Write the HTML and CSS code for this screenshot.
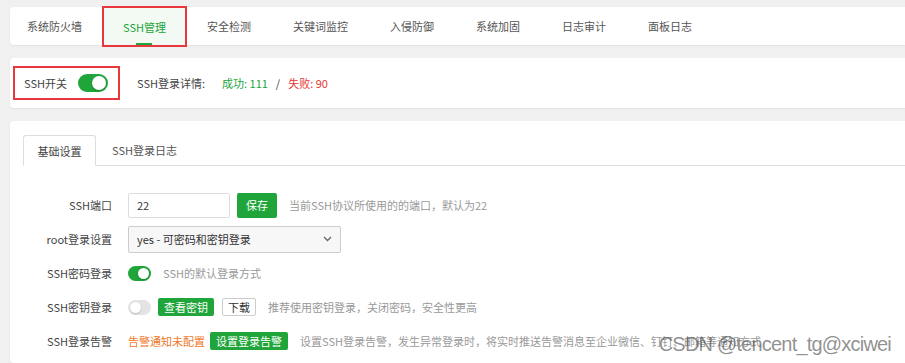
FILE: index.html
```html
<!DOCTYPE html>
<html lang="zh-CN">
<head>
<meta charset="UTF-8">
<meta name="viewport" content="width=device-width, initial-scale=1.0">
<title>安全 - SSH管理</title>
<link rel="stylesheet" href="styles.css">
</head>
<body>
  <div class="page">
    <div class="card nav">
      <a class="nav-tab first">系统防火墙</a>
      <a class="nav-tab active">SSH管理</a>
      <a class="nav-tab">安全检测</a>
      <a class="nav-tab">关键词监控</a>
      <a class="nav-tab">入侵防御</a>
      <a class="nav-tab">系统加固</a>
      <a class="nav-tab">日志审计</a>
      <a class="nav-tab">面板日志</a>
    </div>

    <div class="card status">
      <div class="switch-box">
        <span>SSH开关</span>
        <span class="toggle big on"></span>
      </div>
      <span class="detail-label">SSH登录详情:</span>
      <span class="ok">成功: 111</span>
      <span class="sep">/</span>
      <span class="fail">失败: 90</span>
    </div>

    <div class="card main">
      <div class="sub-tabs">
        <span class="sub-tab active">基础设置</span>
        <span class="sub-tab">SSH登录日志</span>
      </div>

      <div class="form">
        <div class="row">
          <label>SSH端口</label>
          <input class="port" type="text" value="22">
          <button class="btn">保存</button>
          <span class="help">当前SSH协议所使用的的端口，默认为22</span>
        </div>
        <div class="row">
          <label>root登录设置</label>
          <div class="select">
            <span>yes - 可密码和密钥登录</span>
            <svg width="9" height="6" viewBox="0 0 9 6"><path d="M1 1l3.5 3.5L8 1" fill="none" stroke="#666" stroke-width="1.3"/></svg>
          </div>
        </div>
        <div class="row">
          <label>SSH密码登录</label>
          <span class="toggle on"></span>
          <span class="help">SSH的默认登录方式</span>
        </div>
        <div class="row">
          <label>SSH密钥登录</label>
          <span class="toggle"></span>
          <button class="btn small">查看密钥</button>
          <button class="btn small plain">下载</button>
          <span class="help">推荐使用密钥登录，关闭密码，安全性更高</span>
        </div>
        <div class="row">
          <label>SSH登录告警</label>
          <span class="warn">告警通知未配置</span>
          <button class="btn small">设置登录告警</button>
          <span class="help">设置SSH登录告警，发生异常登录时，将实时推送告警消息至企业微信、钉钉、邮箱等通知方式</span>
        </div>
      </div>
    </div>

    <div class="watermark">CSDN @tencent_tg@xciwei</div>
  </div>
</body>
</html>
```

FILE: styles.css
```css
body {
  margin: 0;
  background-color: #f0f0f0;
  color: #555;
  font-family: "Noto Sans CJK SC", "Liberation Sans", sans-serif;
  font-size: 11px;
  overflow: hidden;
}
.page {
  position: relative;
  height: 363px;
  padding: 7px 0 0 10px;
  box-sizing: border-box;
  overflow: hidden;
  white-space: nowrap;
}
.card {
  background-color: #fff;
  border-radius: 4px 0 0 4px;
  box-shadow: 0 1px 2px rgba(0, 0, 0, 0.06);
}

/* top navigation */
.nav {
  display: flex;
  height: 38px;
}
.nav-tab {
  display: flex;
  align-items: center;
  padding: 0 21px;
  color: #555;
  position: relative;
}
.nav-tab.first {
  padding-left: 17px;
}
.nav-tab.active {
  color: #20a53a;
  background-color: #f3faf4;
  padding: 0 20px;
  outline: 2px solid #e8383d;
  outline-offset: -1px;
  height: 39px;
  box-sizing: border-box;
}
.nav-tab.active::after {
  content: "";
  position: absolute;
  left: 50%;
  bottom: 1px;
  width: 16px;
  margin-left: -8px;
  height: 2px;
  background-color: #20a53a;
}

/* status bar */
.status {
  display: flex;
  align-items: center;
  height: 50px;
  margin-top: 13px;
  padding-left: 3px;
}
.switch-box {
  display: flex;
  align-items: center;
  flex-shrink: 0;
  height: 34px;
  padding: 0 14px 0 9px;
  gap: 11px;
  border: 2px solid #e8383d;
  box-sizing: border-box;
  width: 107px;
  color: #444;
}
.detail-label {
  margin-left: 17px;
  color: #444;
}
.ok {
  margin-left: 17px;
  color: #20a53a;
}
.sep {
  margin: 0 8px;
  color: #444;
}
.fail {
  color: #e53935;
}

/* toggles */
.toggle {
  display: inline-block;
  position: relative;
  width: 23px;
  height: 15px;
  border-radius: 8px;
  background-color: #e4e4e4;
  flex-shrink: 0;
}
.toggle::after {
  content: "";
  position: absolute;
  top: 2px;
  left: 2px;
  width: 11px;
  height: 11px;
  border-radius: 50%;
  background-color: #fff;
  box-shadow: 0 1px 2px rgba(0, 0, 0, 0.2);
}
.toggle.on {
  background-color: #20a53a;
}
.toggle.on::after {
  left: 10px;
}
.toggle.big {
  width: 30px;
  height: 18px;
  border-radius: 9px;
}
.toggle.big::after {
  width: 14px;
  height: 14px;
}
.toggle.big.on::after {
  left: 14px;
}

/* main panel */
.main {
  margin-top: 13px;
  height: 228px;
  padding: 14px 0 0 13px;
}
.sub-tabs {
  display: flex;
  height: 30px;
  border-bottom: 1px solid #ddd;
}
.sub-tab {
  display: flex;
  align-items: center;
  padding: 0 16px;
  color: #555;
  flex-shrink: 0;
}
.sub-tab.active {
  width: 73px;
  padding: 0;
  box-sizing: border-box;
  justify-content: center;
  border: 1px solid #ddd;
  border-bottom-color: #fff;
  border-radius: 3px 3px 0 0;
  height: 31px;
  color: #444;
}
.form {
  padding-top: 22px;
}
.row {
  display: flex;
  align-items: center;
  height: 34px;
}
.row label {
  width: 89px;
  flex-shrink: 0;
  text-align: right;
  margin-right: 16px;
  color: #444;
}
.port {
  width: 102px;
  height: 25px;
  box-sizing: border-box;
  border: 1px solid #ddd;
  border-radius: 2px;
  padding: 0 8px;
  font-family: inherit;
  font-size: 11px;
  color: #333;
}
.btn {
  height: 25px;
  padding: 0 9px;
  margin-left: 7px;
  border: none;
  border-radius: 2px;
  background-color: #20a53a;
  color: #fff;
  font-family: inherit;
  font-size: 11px;
  flex-shrink: 0;
}
.btn.small {
  height: 18px;
  padding: 0 6px;
}
.btn.plain {
  background-color: #fff;
  color: #333;
  border: 1px solid #ccc;
  margin-left: 8px;
  padding: 0 5px;
}
.help {
  margin-left: 12px;
  color: #999;
}
.select {
  display: flex;
  align-items: center;
  justify-content: space-between;
  width: 213px;
  height: 27px;
  box-sizing: border-box;
  padding: 0 8px;
  border: 1px solid #ccc;
  border-radius: 2px;
  background-color: #f7f7f7;
  color: #333;
}
.warn {
  color: #f0782a;
}
.warn + .btn {
  margin-left: 5px;
}

/* watermark overlay */
.watermark {
  position: absolute;
  right: 14px;
  bottom: 7px;
  font-family: "Liberation Sans", Arial, sans-serif;
  font-size: 20px;
  letter-spacing: -0.8px;
  color: rgba(70, 70, 70, 0.6);
}
```
